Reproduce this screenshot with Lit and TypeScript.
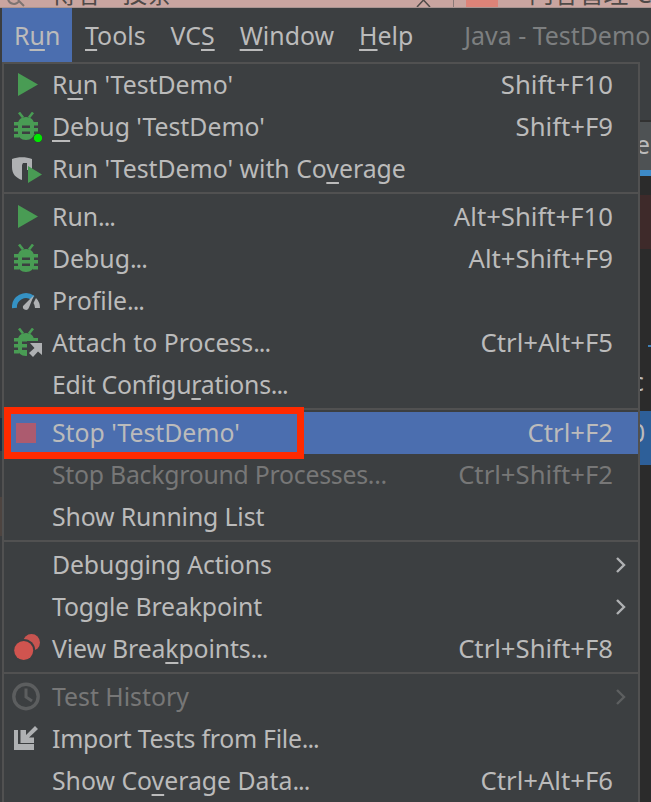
import { LitElement, html, css, svg } from "lit";
import { customElement } from "lit/decorators.js";

const bugBase = svg`
  <path fill="none" stroke="#499c54" stroke-width="2.6" d="M7 0.5l4 5M21 0.5l-4 5"/>
  <path fill="#499c54" d="M2 10h5v3.4H2zM21 10h5v3.4h-5zM2 16h5v3.4H2zM21 16h5v3.4h-5zM2 22h5v3.4H2zM21 22h5v3.4h-5z"/>
`;
const bug = (extra: unknown = "") => svg`<svg class="ic" viewBox="0 0 30 30" width="30" height="30">
  ${bugBase}
  <path fill="#499c54" fill-rule="evenodd" d="M14 5c5 0 8 3 8 7v9c0 4-3 7-8 7s-8-3-8-7v-9c0-4 3-7 8-7zM10 13.5v2.6h8v-2.6zM10 19.5v2.6h8v-2.6z"/>
  ${extra}
</svg>`;

const icons: Record<string, unknown> = {
  play: svg`<svg class="ic" viewBox="0 0 30 30" width="30" height="30"><path fill="#499c54" d="M6 3l20 11.5L6 26z"/></svg>`,
  debugDot: bug(svg`<circle cx="26" cy="26" r="4.6" fill="#00e800" stroke="#2f4a30" stroke-width="1"/>`),
  debug: bug(),
  coverage: svg`<svg class="ic" viewBox="0 0 30 30" width="30" height="30">
    <path fill="#afb1b3" d="M0 5c6-2.500 14-2.500 20 0v11h-5V9h-4l-1 2v15C4 24 0 20 0 13z"/>
    <path fill="#499c54" d="M16 12l14 8.500L16 29z"/></svg>`,
  profile: svg`<svg class="ic" viewBox="0 0 30 30" width="30" height="30">
    <path fill="none" stroke="#3592c4" stroke-width="5" d="M2.500 22A11.500 11.500 0 0 1 21 12"/>
    <path fill="#afb1b3" d="M11 20l11-11-5 12.500a3 3 0 0 1-6-1.500zM24 12a14 14 0 0 1 4 10h-5a9 9 0 0 0-1.500-5z"/></svg>`,
  attach: svg`<svg class="ic" viewBox="0 0 30 30" width="30" height="30">
    ${bugBase}
    <path fill="#499c54" fill-rule="evenodd" d="M14 5c5 0 8 3 8 7v9c0 4-3 7-8 7s-8-3-8-7v-9c0-4 3-7 8-7zM10 13.500v2.600h8v-2.600zM10 19.500v2.600h5v-2.600z"/>
    <path fill="#3c3f41" d="M15 13h15v17H15z"/>
    <path fill="#499c54" d="M20 11h6v2h-6z"/>
    <path fill="#afb1b3" d="M18 15h12v12l-4-3.500-5 5.500-4-4 5.500-5z"/>
  </svg>`,
  breakpoints: svg`<svg class="ic" viewBox="0 0 30 30" width="30" height="30">
    <circle cx="19.500" cy="8.500" r="8.500" fill="#c75450"/><circle cx="11.700" cy="16.500" r="11.500" fill="#3c3f41"/><circle cx="11.700" cy="16.500" r="9.500" fill="#d0544f"/></svg>`,
  history: svg`<svg class="ic" viewBox="0 0 30 30" width="30" height="30">
    <circle cx="14" cy="14.500" r="12.200" fill="none" stroke="#5c5e5f" stroke-width="3.400"/>
    <path fill="none" stroke="#5c5e5f" stroke-width="3" d="M14 6.500V15l6 4"/></svg>`,
  importTests: svg`<svg class="ic" viewBox="0 0 30 30" width="30" height="30">
    <path fill="#afb1b3" d="M2 6h4v14h16v6H2z"/>
    <path fill="#afb1b3" d="M26 5l-3-3-9 9V6H8.500v13H22v-5.500h-5z"/></svg>`,
};

type Item = { icon?: string; label?: unknown; key?: string; off?: boolean; sel?: boolean; sub?: boolean; fit?: string } | null;
const U = (s: string) => html`<span class="u">${s}</span>`;
const D = html`<span class="d">...</span>`;

const items: Item[] = [
  { icon: "play", label: html`R${U("u")}n 'TestDemo'`, key: "Shift+F10" },
  { icon: "debugDot", label: html`${U("D")}ebug 'TestDemo'`, key: "Shift+F9" },
  { icon: "coverage", label: html`Run 'TestDemo' with Co${U("v")}erage` },
  null,
  { icon: "play", label: html`Run${D}`, key: "Alt+Shift+F10" },
  { icon: "debug", label: html`Debug${D}`, key: "Alt+Shift+F9" },
  { icon: "profile", label: html`Profile${D}` },
  { icon: "attach", label: html`Attach to Process${D}`, key: "Ctrl+Alt+F5" },
  { label: html`Edit Configu${U("r")}ations${D}`, fit: "tight" },
  null,
  { icon: "stop", label: "Stop 'TestDemo'", key: "Ctrl+F2", sel: true },
  { label: html`Stop Background Processes...`, key: "Ctrl+Shift+F2", off: true, fit: "tight" },
  { label: "Show Running List", fit: "snug" },
  null,
  { label: "Debugging Actions", sub: true, fit: "snug" },
  { label: "Toggle Breakpoint", sub: true, fit: "snug" },
  { icon: "breakpoints", label: html`View Brea${U("k")}points${D}`, key: "Ctrl+Shift+F8", fit: "snug" },
  null,
  { icon: "history", label: "Test History", sub: true, off: true },
  { icon: "importTests", label: html`Import Tests from File${D}`, fit: "tight" },
  { label: html`Show Co${U("v")}erage Data${D}`, key: "Ctrl+Alt+F6" },
];

@customElement("app-root")
export class AppRoot extends LitElement {
  static styles = css`
    :host { display: block; width: 651px; height: 802px; overflow: hidden; position: relative; background: #3c3f41;
      font-family: "Noto Sans", "Noto Sans CJK SC", sans-serif; font-size: 24.8px; color: #bbbbbb; }
    .top { height: 8px; background: #c9a5a0; overflow: hidden; display: flex; align-items: flex-end; color: #4f4a48; box-sizing: border-box; border-bottom: 1px solid #a89491; white-space: nowrap; }
    .top span, .top svg { flex: none; }
    .top .t { line-height: 27px; height: 27px; }
    .top .search { margin-left: 6px; }
    .top .blog { margin-left: 26px; }
    .top .x { margin-left: 244px; }
    .top .vl { width: 1px; height: 8px; background: #8a7a78; margin-left: 22px; }
    .top .logo { width: 32px; height: 8px; background: #dd8378; margin-left: 12px; }
    .top .cms { margin-left: 31px; }
    .win { display: grid; grid-template-columns: 2px 1fr; height: 794px; }
    .edge { background: #3b3d3f; display: flex; flex-direction: column; }
    .edge i { display: block; flex: none; }
    .e1 { height: 410px; }
    .e2 { height: 33px; background: #1f2b3c; }
    .e3 { height: 46px; }
    .e4 { height: 39px; background: #4d4440; }
    .main { display: flex; flex-direction: column; min-width: 0; }
    .bar { height: 54px; display: flex; align-items: center; border-bottom: 2px solid #515151; white-space: nowrap; overflow: hidden; flex: none; font-size: 24.9px; }
    .m { height: 54px; line-height: 54px; padding: 0 12px 0 13px; flex: none; }
    .m.on { background: #4b6eaf; width: 70px; box-sizing: border-box; padding: 0 0 0 12px; }
    .title { color: #7d7f80; margin-left: 39px; flex: none; }
    .u { text-decoration: underline; text-underline-offset: 4px; text-decoration-thickness: 2px; }
    .d { letter-spacing: -1px; }
    .body { display: flex; flex: 1; min-height: 0; }
    .menu { width: 634px; flex: none; border-left: 2px solid #515151; border-right: 2px solid #515151; }
    .row { height: 42px; display: flex; align-items: center; white-space: nowrap; position: relative; }
    .row.sel { background: #4b6eaf; }
    .row.off { color: #777777; }
    .icw { width: 48px; padding-left: 8px; flex: none; box-sizing: border-box; display: flex; align-items: center; height: 30px; }
    .ic { display: block; }
    .stop { width: 20px; height: 20px; background: #ac5b6f; margin-left: 4px; }
    .grow { flex: 1; padding-bottom: 2px; }
    .grow.tight { letter-spacing: -0.25px; }
    .grow.snug { letter-spacing: -0.13px; }
    .key { padding: 0 25px 2px 0; font-size: 25.7px; }
    .chev { position: absolute; right: 11px; top: 12px; }
    .sep { height: 6px; display: flex; align-items: center; }
    .sep i { display: block; height: 2px; width: 100%; background: #515151; }
    .mark { position: absolute; left: 4px; top: 407px; width: 300px; height: 52px; box-sizing: border-box; border: 7px solid #ff2a00; pointer-events: none; }
    .side { flex: 1; min-width: 0; background: #2b2b2b; display: flex; flex-direction: column; overflow: hidden; margin-top: -2px; }
    .side > div { flex: none; overflow: hidden; white-space: nowrap; }
    .s1 { height: 58px; background: #3c3f41; border-bottom: 2px solid #323232; }
    .s2 { height: 48px; background: #4e5254; color: #bbbbbb; line-height: 44px; text-indent: -4px; }
    .s3 { height: 6px; background: #3d8ac7; }
    .s4 { height: 19px; }
    .s5 { height: 54px; background: #3e2a2a; }
    .s6 { height: 98px; display: flex; padding: 0 0 0 8px; box-sizing: border-box; align-items: flex-end; }
    .s6 i { display: block; width: 3px; height: 2px; background: #3d7fb5; }
    .s7 { height: 64px; line-height: 60px; text-indent: -8px; color: #bbbbbb; display: flex; align-items: flex-end; }
    .s8 { height: 54px; background: #2d5f99; line-height: 42px; text-indent: -9px; color: #bbbbbb; }
  `;
  render() {
    return html`
      <div class="top">
        <svg class="search" width="20" height="8" viewBox="0 0 20 8"><path d="M2 0a6 6 0 0 0 11 2M12 1l6 6" fill="none" stroke="#7d7472" stroke-width="2"/></svg>
        <span class="t blog">博客 - 技条</span>
        <svg class="x" width="15" height="7" viewBox="0 0 15 7"><path d="M1 7L7.500 0L14 7" fill="none" stroke="#4f4a48" stroke-width="1.500"/></svg>
        <span class="vl"></span>
        <span class="logo"></span>
        <span class="t cms">内容管理-C</span>
      </div>
      <div class="win">
        <div class="edge"><i class="e1"></i><i class="e2"></i><i class="e3"></i><i class="e4"></i></div>
        <div class="main">
          <div class="bar">
            <div class="m on">R${U("u")}n</div>
            <div class="m">${U("T")}ools</div>
            <div class="m">VC${U("S")}</div>
            <div class="m">${U("W")}indow</div>
            <div class="m">${U("H")}elp</div>
            <div class="title">Java - TestDemo</div>
          </div>
          <div class="body">
            <div class="menu">
              ${items.map((it) =>
                it === null
                  ? html`<div class="sep"><i></i></div>`
                  : html`<div class="row ${it.sel ? "sel" : ""} ${it.off ? "off" : ""}">
                      <div class="icw">${it.icon === "stop" ? html`<div class="stop"></div>` : it.icon ? icons[it.icon] : ""}</div>
                      <div class="grow ${it.fit ?? ""}">${it.label}</div>
                      ${it.key ? html`<div class="key">${it.key}</div>` : ""}
                      ${it.sub
                        ? html`<svg class="chev" width="12" height="18" viewBox="0 0 12 18"><path d="M2 2l7 7-7 7" fill="none" stroke="${it.off ? "#5d5f60" : "#afb1b3"}" stroke-width="2.400"/></svg>`
                        : ""}
                    </div>`
              )}
            </div>
            <div class="side">
              <div class="s1"></div>
              <div class="s2">e</div>
              <div class="s3"></div>
              <div class="s4"></div>
              <div class="s5"></div>
              <div class="s6"><i></i></div>
              <div class="s7">c</div>
              <div class="s8">0</div>
            </div>
          </div>
        </div>
      </div>
      <div class="mark"></div>
    `;
  }
}
